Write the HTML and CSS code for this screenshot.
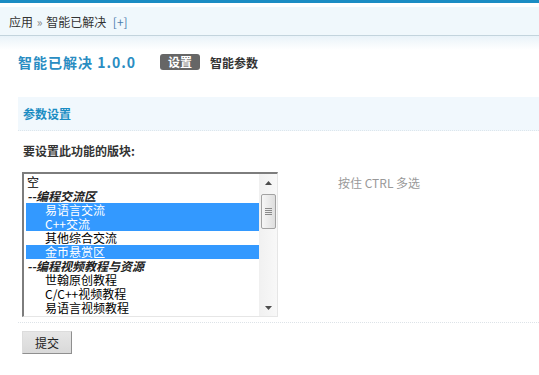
FILE: index.html
```html
<!DOCTYPE html>
<html lang="zh-CN">
<head>
    <meta charset="UTF-8">
    <title>智能已解决 - 设置</title>
    <link rel="stylesheet" href="styles.css">
</head>
<body>
    <div class="topbar"></div>
    <div class="nav">
        <div class="crumb">应用 <span class="sep">&raquo;</span> 智能已解决 <a class="add" href="#">[+]</a></div>
    </div>

    <div class="main">
        <div class="title-row">
            <h1 class="title">智能已解决 1.0.0</h1>
            <span class="tab active">设置</span>
            <span class="tab">智能参数</span>
        </div>

        <div class="section-head">参数设置</div>

        <div class="field-label">要设置此功能的版块:</div>
        <div class="field-row">
            <div class="multi-select">
                <ul class="options">
                    <li class="option">空</li>
                    <li class="group">--编程交流区</li>
                    <li class="option sub selected">易语言交流</li>
                    <li class="option sub selected">C++交流</li>
                    <li class="option sub">其他综合交流</li>
                    <li class="option sub selected">金币悬赏区</li>
                    <li class="group">--编程视频教程与资源</li>
                    <li class="option sub">世翰原创教程</li>
                    <li class="option sub">C/C++视频教程</li>
                    <li class="option sub">易语言视频教程</li>
                </ul>
                <div class="scrollbar">
                    <div class="arrow up"><svg width="7" height="4" viewBox="0 0 7 4"><path d="M0 4 L3.5 0 L7 4 Z" fill="#4d4d4d"/></svg></div>
                    <div class="track">
                        <div class="thumb">
                            <svg width="7" height="8" viewBox="0 0 7 8"><path d="M0 0.5 H7 M0 2.5 H7 M0 4.5 H7 M0 6.5 H7" stroke="#8a8a8a" stroke-width="1"/></svg>
                        </div>
                    </div>
                    <div class="arrow down"><svg width="7" height="4" viewBox="0 0 7 4"><path d="M0 0 L3.5 4 L7 0 Z" fill="#4d4d4d"/></svg></div>
                </div>
            </div>
            <div class="tip">按住 CTRL 多选</div>
        </div>

        <div class="submit-row">
            <button class="button" type="button">提交</button>
        </div>
    </div>
</body>
</html>
```

FILE: styles.css
```css
body {
    margin: 0;
    font-family: Tahoma, "Noto Sans CJK SC", sans-serif;
    font-size: 12px;
    color: #333;
    background-color: #fff;
}

.topbar {
    height: 3px;
    background-color: #1b8cc3;
    margin-bottom: 4px;
}

.nav {
    height: 28px;
    background-color: #f0f8fc;
    border-bottom: 1px solid #c3d4dd;
}

.crumb {
    padding-left: 9px;
    line-height: 29px;
    color: #333;
}

.crumb .sep {
    color: #888;
    margin: 0 1px;
}

.crumb .add {
    color: #4d7fae;
    text-decoration: none;
    margin-left: 4px;
}

.main {
    padding-left: 18px;
    background: linear-gradient(to bottom, #e9f3f9, #fff 14px) no-repeat;
}

.title-row {
    display: flex;
    align-items: center;
    height: 24px;
    padding-top: 14px;
    margin-bottom: 23px;
}

.title {
    margin: 0 24px 0 0;
    font-size: 14px;
    letter-spacing: 1px;
    color: #2a8dc2;
    line-height: 24px;
}

.tab {
    font-weight: bold;
    color: #333;
    margin-right: 10px;
}

.tab.active {
    background-color: #666;
    color: #fff;
    border-radius: 3px;
    padding: 0 8px;
    line-height: 16px;
}

.section-head {
    height: 33px;
    line-height: 33px;
    padding-left: 5px;
    background-color: #f1f8fd;
    border-bottom: 1px dotted #dde6ec;
    color: #1b8cc3;
    font-weight: bold;
}

.field-label {
    padding: 11px 0 0 5px;
    line-height: 18px;
    font-weight: bold;
    color: #333;
}

.field-row {
    display: flex;
    align-items: flex-start;
    gap: 60px;
    padding: 12px 0 5px 4px;
    border-bottom: 1px dotted #dde3e8;
}

.multi-select {
    display: flex;
    width: 253px;
    height: 142px;
    border: 2px solid;
    border-color: #7d7d7d #e6e6e6 #e6e6e6 #7d7d7d;
    border-right-width: 1px;
    border-bottom-width: 1px;
    overflow: hidden;
}

.options {
    flex: 1;
    list-style: none;
    margin: 0;
    padding: 1px 0 0 2px;
    color: #000;
}

.option,
.group {
    height: 14px;
    line-height: 14px;
    padding-left: 1px;
    white-space: nowrap;
}

.option.sub {
    padding-left: 19px;
}

.option.selected {
    background-color: #3399ff;
    color: #fff;
}

.group {
    font-weight: bold;
    font-style: italic;
    color: #222;
}

.scrollbar {
    width: 17px;
    display: flex;
    flex-direction: column;
    background: linear-gradient(to right, #f1f1f1, #f8f8f8);
    border-left: 1px solid #f0f0f0;
}

.arrow {
    height: 17px;
    display: flex;
    align-items: center;
    justify-content: center;
}

.track {
    flex: 1;
    padding-top: 3px;
}

.thumb {
    height: 33px;
    margin: 0 1px;
    border: 1px solid #a2a2a2;
    border-radius: 2px;
    background: linear-gradient(to right, #f6f6f6, #dedede);
    display: flex;
    align-items: center;
    justify-content: center;
}

.tip {
    color: #999;
    line-height: 18px;
    margin-top: 2px;
}

.submit-row {
    padding: 8px 0 0 4px;
}

.button {
    width: 50px;
    height: 23px;
    padding: 0;
    font-family: inherit;
    font-size: 12px;
    color: #222;
    background: linear-gradient(to bottom, #e6e6e6, #d9d9d9);
    border: 1px solid;
    border-color: #dcdcdc #8f8f8f #8f8f8f #dcdcdc;
}
```
